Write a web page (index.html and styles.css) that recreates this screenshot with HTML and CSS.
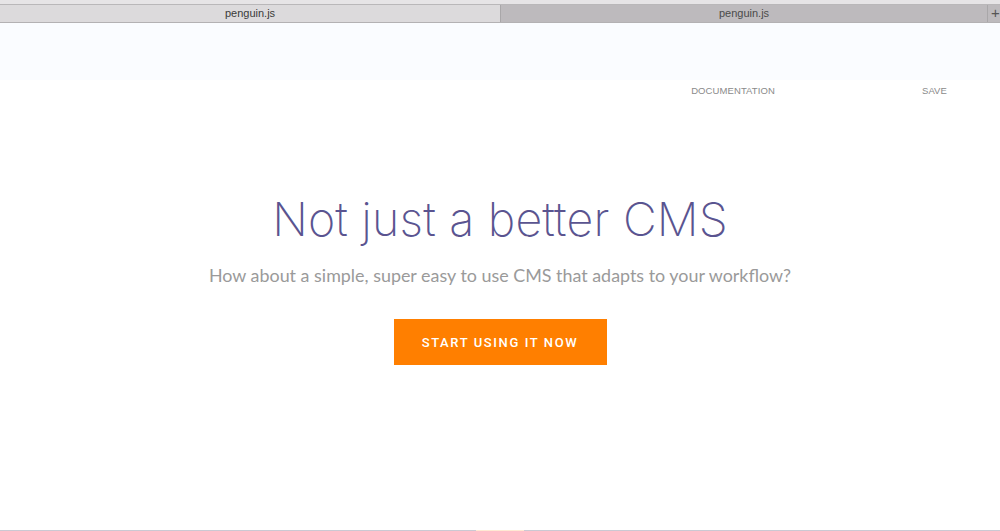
FILE: index.html
```html
<!DOCTYPE html>
<html>
<head>
<meta charset="utf-8">
<link rel="stylesheet" href="styles.css">
</head>
<body>
<div class="chrome">
  <div class="chrome-top"></div>
  <div class="tabs">
    <div class="tab tab-active">penguin.js</div>
    <div class="tab tab-inactive">penguin.js</div>
    <div class="tab-add">+</div>
  </div>
</div>
<div class="page">
  <div class="banner"></div>
  <nav class="nav">
    <a class="nav-link">DOCUMENTATION</a>
    <a class="nav-link nav-save">SAVE</a>
  </nav>
  <main class="hero">
    <h1 class="hero-title">Not just a better CMS</h1>
    <p class="hero-sub">How about a simple, super easy to use CMS that adapts to your workflow?</p>
    <button class="hero-btn">START USING IT NOW</button>
  </main>
  <div class="bottom-bar"><span class="bottom-accent"></span></div>
</div>
</body>
</html>
```
FILE: styles.css
```css
* { box-sizing: border-box; }
html, body { margin: 0; padding: 0; }
body {
  width: 1000px;
  height: 531px;
  overflow: hidden;
  background: #fff;
  font-family: "Liberation Sans", Arial, sans-serif;
  display: flex;
  flex-direction: column;
}
.chrome { flex: none; }
.chrome-top {
  height: 5px;
  background: #e6e4e6;
  border-bottom: 1px solid #b9b7b9;
}
.tabs {
  display: flex;
  height: 18px;
  border-bottom: 1px solid #b3b1b3;
}
.tab {
  font-size: 11px;
  line-height: 17px;
  text-align: center;
  color: #3a3a3a;
}
.tab-active {
  width: 501px;
  background: #dcdadc;
  border-right: 1px solid #a9a7a9;
}
.tab-inactive {
  width: 487px;
  background: #bdbabd;
  color: #4a4a4a;
  border-right: 1px solid #a9a7a9;
}
.tab-add {
  flex: 1;
  background: #bdbabd;
  color: #555;
  font-size: 15px;
  line-height: 16px;
  padding-left: 3px;
}
.page {
  flex: 1;
  display: flex;
  flex-direction: column;
}
.banner {
  height: 57px;
  background: #fafcff;
}
.nav {
  display: flex;
  justify-content: flex-end;
  gap: 147px;
  padding: 5px 53px 0 0;
  height: 28px;
}
.nav-link {
  font-family: "Liberation Sans", Arial, sans-serif;
  font-size: 9.5px;
  letter-spacing: 0.1px;
  color: #8a8a8a;
  line-height: 12px;
}
.hero {
  display: flex;
  flex-direction: column;
  align-items: center;
  padding-top: 82px;
}
.hero-title {
  margin: 0;
  font-family: Inter, sans-serif;
  font-weight: 200;
  font-size: 46.5px;
  line-height: 58px;
  color: #5a5490;
  letter-spacing: 0.2px;
}
.hero-sub {
  margin: 15px 0 0;
  font-family: Lato, sans-serif;
  font-size: 17.9px;
  line-height: 24px;
  color: #9a9a9a;
}
.hero-btn {
  margin-top: 32px;
  width: 213px;
  height: 46px;
  border: none;
  background: #ff7f00;
  color: #fff;
  font-family: Roboto, sans-serif;
  font-size: 13px;
  font-weight: 500;
  letter-spacing: 1.6px;
}
.bottom-bar {
  margin-top: auto;
  height: 1px;
  background: #cbc9d3;
  display: flex;
  justify-content: center;
}
.bottom-accent {
  width: 48px;
  background: #ffe9d3;
}
```
